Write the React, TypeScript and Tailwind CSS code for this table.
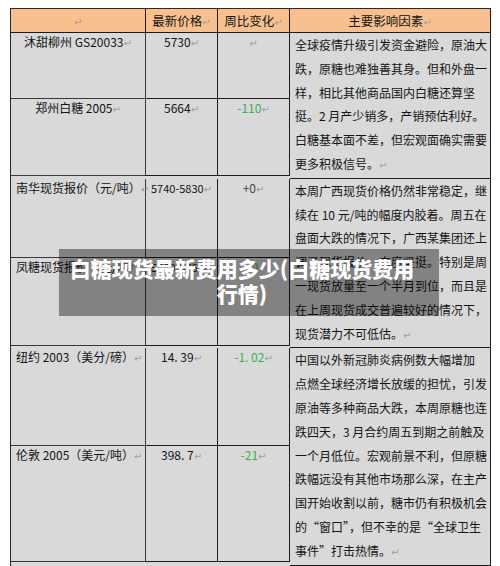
const CJK = { fontFamily: '"Noto Sans CJK SC", "Noto Sans", sans-serif' };

function Ret() {
  return (
    <span className="text-[10px] text-[#a0a0a0]" style={{ fontFamily: '"DejaVu Sans", sans-serif' }}>
      ↵
    </span>
  );
}

type Row = {
  name: string;
  price: string;
  change: string;
  tone: "green" | "dark" | "none";
  align: "center" | "left";
  h: string;
};

const rows: Row[] = [
  { name: "沐甜柳州 GS20033", price: "5730", change: "", tone: "none", align: "center", h: "h-[66px]" },
  { name: "郑州白糖 2005", price: "5664", change: "-110", tone: "green", align: "center", h: "h-[77px]" },
  { name: "南华现货报价（元/吨）", price: "5740-5830", change: "+0", tone: "dark", align: "left", h: "h-[79px]" },
  { name: "凤糖现货报价（元/吨）", price: "5660-5760", change: "-80", tone: "green", align: "left", h: "h-[88px]" },
  { name: "纽约 2003（美分/磅）", price: "14. 39", change: "-1. 02", tone: "green", align: "left", h: "h-[98px]" },
  { name: "伦敦 2005（美元/吨）", price: "398. 7", change: "-21", tone: "green", align: "left", h: "h-[116px]" },
];

const factors: string[][] = [
  [
    "全球疫情升级引发资金避险，原油大",
    "跌，原糖也难独善其身。但和外盘一",
    "样，相比其他商品国内白糖还算坚",
    "挺。2 月产少销多，产销预估利好。",
    "白糖基本面不差，但宏观面确实需要",
    "更多积极信号。",
  ],
  [
    "本周广西现货价格仍然非常稳定，继",
    "续在 10 元/吨的幅度内胶着。周五在",
    "盘面大跌的情况下，广西某集团还上",
    "调了现货报价，态度坚挺。特别是周",
    "一现货放量至一个半月到位，而且是",
    "在上周现货成交普遍较好的情况下，",
    "现货潜力不可低估。",
  ],
  [
    "中国以外新冠肺炎病例数大幅增加",
    "点燃全球经济增长放缓的担忧，引发",
    "原油等多种商品大跌，本周原糖也连",
    "跌四天，3 月合约周五到期之前触及",
    "一个月低位。宏观前景不利，但原糖",
    "跌幅远没有其他市场那么深，在主产",
    "国开始收割以前，糖市仍有积极机会",
    "的“窗口”，但不幸的是“全球卫生",
    "事件”打击热情。",
  ],
];

function SmallCell({ row }: { row: Row }) {
  const changeColor =
    row.tone === "green" ? "text-[#30b552]" : "text-[#444]";
  return (
    <div className="flex">
      <div
        className={`w-[135px] ${row.h} border-r border-b border-[#3a3a3a] pt-[1px] leading-4 whitespace-nowrap ${
          row.align === "center" ? "text-center" : "pl-[5px]"
        }`}
      >
        {row.name}
        <Ret />
      </div>
      <div className={`w-[72px] ${row.h} border-r border-b border-[#1c1c1c] pt-[1px] leading-4 text-center whitespace-nowrap`}>
        <span className={row.price.length > 7 ? "text-[11px]" : ""}>{row.price}</span>
        <Ret />
      </div>
      <div className={`w-[72px] ${row.h} border-r border-b border-[#1c1c1c] pt-[1px] leading-4 text-center whitespace-nowrap`}>
        <span className={changeColor}>{row.change}</span>
        <Ret />
      </div>
    </div>
  );
}

export default function App() {
  return (
    <div className="relative w-[500px] h-[566px] bg-white overflow-hidden text-[12px] text-[#141414]" style={CJK}>
      <div className="ml-[10px] mt-[8px] w-[481px] border-l border-t border-[#2a2a2a]">
        {/* header */}
        <div className="flex h-[24px] bg-[#f8c08e] text-[12.5px] leading-[23px]">
          <div className="w-[135px] border-r border-b border-[#1c1c1c] text-center">
            <Ret />
          </div>
          <div className="w-[72px] border-r border-b border-[#1c1c1c] text-center">
            最新价格
            <Ret />
          </div>
          <div className="w-[72px] border-r border-b border-[#1c1c1c] text-center">
            周比变化
            <Ret />
          </div>
          <div className="w-[201px] border-r border-b border-[#1c1c1c] text-center">
            主要影响因素
            <Ret />
          </div>
        </div>

        {/* body: pairs of rows share one factor cell */}
        <div className="bg-[#d9d9d9]">
          {[0, 1, 2].map((g) => (
            <div key={g} className="flex">
              <div className="flex flex-col">
                <SmallCell row={rows[g * 2]} />
                <SmallCell row={rows[g * 2 + 1]} />
              </div>
              <div className="w-[201px] border-r border-b border-[#1c1c1c] pl-[5px] leading-[23.8px] whitespace-nowrap text-[12px]">
                {factors[g].map((line, i) => (
                  <div key={i}>
                    {line}
                    {i === factors[g].length - 1 && <Ret />}
                  </div>
                ))}
              </div>
            </div>
          ))}
        </div>
      </div>

      {/* title overlay */}
      <div className="absolute left-[59px] top-[249px] w-[380px] h-[67px] bg-black/40 flex items-center justify-center pl-[8px] pr-[22px] pb-[3px]">
        <p className="text-center text-white font-black text-[21px] leading-[25px]">
          白糖现货最新费用多少(白糖现货费用行情)
        </p>
      </div>
    </div>
  );
}
